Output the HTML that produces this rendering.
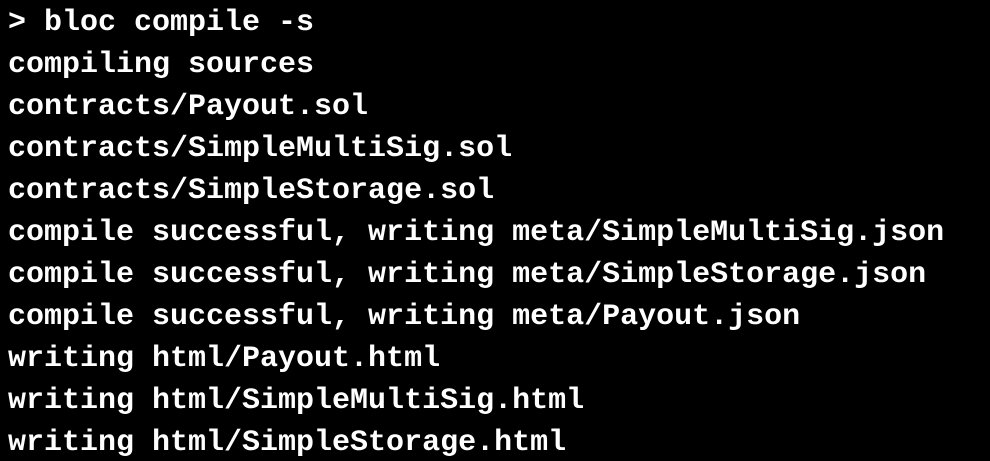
<!DOCTYPE html>
<html><head><meta charset="utf-8"><style>
html,body{margin:0;padding:0;background:#000;width:990px;height:461px;overflow:hidden}
pre{margin:0;padding:2px 0 0 8px;font-family:"Liberation Mono",monospace;font-weight:bold;font-size:30px;line-height:42px;color:#fff;letter-spacing:0}
</style></head><body><pre>&gt; bloc compile -s
compiling sources
contracts/Payout.sol
contracts/SimpleMultiSig.sol
contracts/SimpleStorage.sol
compile successful, writing meta/SimpleMultiSig.json
compile successful, writing meta/SimpleStorage.json
compile successful, writing meta/Payout.json
writing html/Payout.html
writing html/SimpleMultiSig.html
writing html/SimpleStorage.html</pre></body></html>
